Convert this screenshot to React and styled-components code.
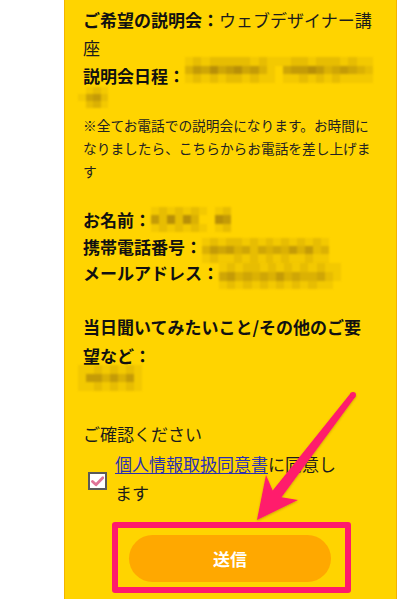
import React from "react";
import styled, { createGlobalStyle } from "styled-components";

const Global = createGlobalStyle`
  html, body { margin: 0; padding: 0; background: #ffffff; }
  body { font-family: "Noto Sans CJK JP", "Noto Sans", sans-serif; }
`;

const Page = styled.div`
  position: relative;
  width: 414px;
  height: 599px;
  overflow: hidden;
  display: flex;
  background: #ffffff;
`;

const Panel = styled.main`
  box-sizing: border-box;
  margin-left: 64px;
  width: 333px;
  height: 599px;
  background: #ffd400;
  border-left: 1px solid #f3b400;
  border-right: 1px solid #f3b400;
  padding: 6px 21px 0 18px;
  color: #1c1c1c;
  font-family: "Noto Sans CJK JP", sans-serif;
`;

const Block = styled.div`
  font-size: ${(p) => p.$size || 17}px;
  line-height: ${(p) => p.$lh}px;
  margin-top: ${(p) => p.$mt || 0}px;
  color: ${(p) => p.$color || "#1c1c1c"};
`;

const Line = styled.div``;

const Bold = styled.span`
  font-weight: 700;
  color: #111;
`;

const MosaicLine = styled.div`
  height: ${(p) => p.$h}px;
`;

const MosaicBox = styled.span`
  display: inline-grid;
  vertical-align: top;
  width: ${(p) => p.$w}px;
  height: ${(p) => p.$h}px;
  grid-template-columns: repeat(${(p) => p.$cols}, 1fr);
  grid-template-rows: repeat(${(p) => p.$rows}, 1fr);
  transform: translate(${(p) => p.$dx || 0}px, ${(p) => p.$dy || 0}px);
  filter: blur(0.8px);
`;

const Cell = styled.span`
  display: block;
`;

function Mosaic({ w, h, rows, dx, dy }) {
  const cols = rows[0].length;
  return (
    <MosaicBox $w={w} $h={h} $cols={cols} $rows={rows.length} $dx={dx} $dy={dy} aria-hidden="true">
      {rows.map((r, ri) =>
        r.split("").map((c, ci) => (
          <Cell
            key={`${ri}-${ci}`}
            style={{ background: `rgba(130, 92, 12, ${(c === " " ? 0 : Number(c)) * 0.095})` }}
          />
        ))
      )}
    </MosaicBox>
  );
}

const CheckRow = styled.div`
  display: flex;
  align-items: flex-start;
  margin-top: 1px;
`;

const CheckBox = styled.span`
  box-sizing: border-box;
  flex: none;
  width: 19px;
  height: 18px;
  margin: 23px 0 0 5px;
  background: #ffffff;
  border: 2px solid #5a5a5a;
  display: flex;
  align-items: center;
  justify-content: center;
`;

const Label = styled.div`
  margin-left: 8px;
  max-width: 232px;
  font-size: 17px;
  line-height: 29px;
  color: #1c1c1c;
`;

const Link = styled.a`
  color: #2a2fb3;
  text-decoration: underline;
  text-underline-offset: 2px;
`;

const Frame = styled.div`
  box-sizing: border-box;
  width: 239px;
  margin: 15px 0 0 29px;
  border: 6px solid #ff1a6c;
  border-radius: 3px;
  padding: 7px 14px 5px 11px;
`;

const SubmitButton = styled.button`
  display: flex;
  align-items: center;
  justify-content: center;
  width: 202px;
  height: 47px;
  border: none;
  border-radius: 24px;
  background: #ffa800;
  color: #ffffff;
  font-family: "Noto Sans CJK JP", sans-serif;
  font-weight: 700;
  font-size: 17px;
  padding: 0;
`;

const Overlay = styled.svg`
  position: absolute;
  left: 0;
  top: 0;
  width: 414px;
  height: 599px;
  pointer-events: none;
`;

export default function App() {
  return (
    <>
      <Global />
      <Page>
        <Panel>
          <Block $lh={28}>
            <Line>
              <Bold>ご希望の説明会：</Bold>ウェブデザイナー講座
            </Line>
            <Line>
              <Bold>説明会日程：</Bold>
              <Mosaic
                w={188}
                h={26}
                dy={-5}
                rows={[
                  "12122222121112212221211",
                  "35464564531045565345432",
                  "12121221211011212121111",
                ]}
              />
            </Line>
          </Block>
          <MosaicLine $h={24}>
            <Mosaic w={30} h={21} dx={-5} dy={-3} rows={["0121", "1452", "0231"]} />
          </MosaicLine>
          <Block $size={13.7} $lh={23} $color="#222">
            ※全てお電話での説明会になります。お時間になりましたら、こちらからお電話を差し上げます
          </Block>
          <Block $lh={26.7} $mt={24}>
            <Line>
              <Bold>お名前：</Bold>
              <Mosaic w={80} h={25} rows={["1212121012", "5262630065", "1212121012"]} />
            </Line>
            <Line>
              <Bold>携帯電話番号：</Bold>
              <Mosaic
                w={127}
                h={25}
                dy={4}
                rows={["1212212121212121", "3545342434353523", "1211212121211211"]}
              />
            </Line>
            <Line>
              <Bold>メールアドレス：</Bold>
              <Mosaic
                w={122}
                h={26}
                dy={3}
                rows={["121221212121211", "453434353433421", "121212121212110"]}
              />
            </Line>
          </Block>
          <Block $lh={29} $mt={25}>
            <Bold>当日聞いてみたいこと/その他のご要望など：</Bold>
          </Block>
          <MosaicLine $h={29}>
            <Mosaic w={72} h={26} dx={-5} dy={-5} rows={["112121210", "155353510", "112121210"]} />
          </MosaicLine>
          <Block $lh={29} $mt={20}>
            ご確認ください
          </Block>
          <CheckRow>
            <CheckBox>
              <svg width="13" height="11" viewBox="0 0 13 11">
                <path
                  d="M1.5 5.5 L5 8.8 L11.8 1.8"
                  fill="none"
                  stroke="#e07398"
                  strokeWidth="2.8"
                  strokeLinecap="round"
                  strokeLinejoin="round"
                />
              </svg>
            </CheckBox>
            <Label>
              <Link href="#">個人情報取扱同意書</Link>に同意します
            </Label>
          </CheckRow>
          <Frame>
            <SubmitButton type="button">送信</SubmitButton>
          </Frame>
        </Panel>
        <Overlay viewBox="0 0 414 599">
          <defs>
            <filter id="arrowShadow" x="-20%" y="-20%" width="140%" height="140%">
              <feDropShadow dx="0" dy="1" stdDeviation="1.2" floodColor="#6b3a00" floodOpacity="0.35" />
            </filter>
          </defs>
          <g fill="#ff1a6c" filter="url(#arrowShadow)">
            <polygon points="350.6,393.2 272.7,490.5 266,475 257,520 298,500 281.5,497.2 355.4,396.8" />
            <circle cx="353" cy="395" r="3" />
          </g>
        </Overlay>
      </Page>
    </>
  );
}
